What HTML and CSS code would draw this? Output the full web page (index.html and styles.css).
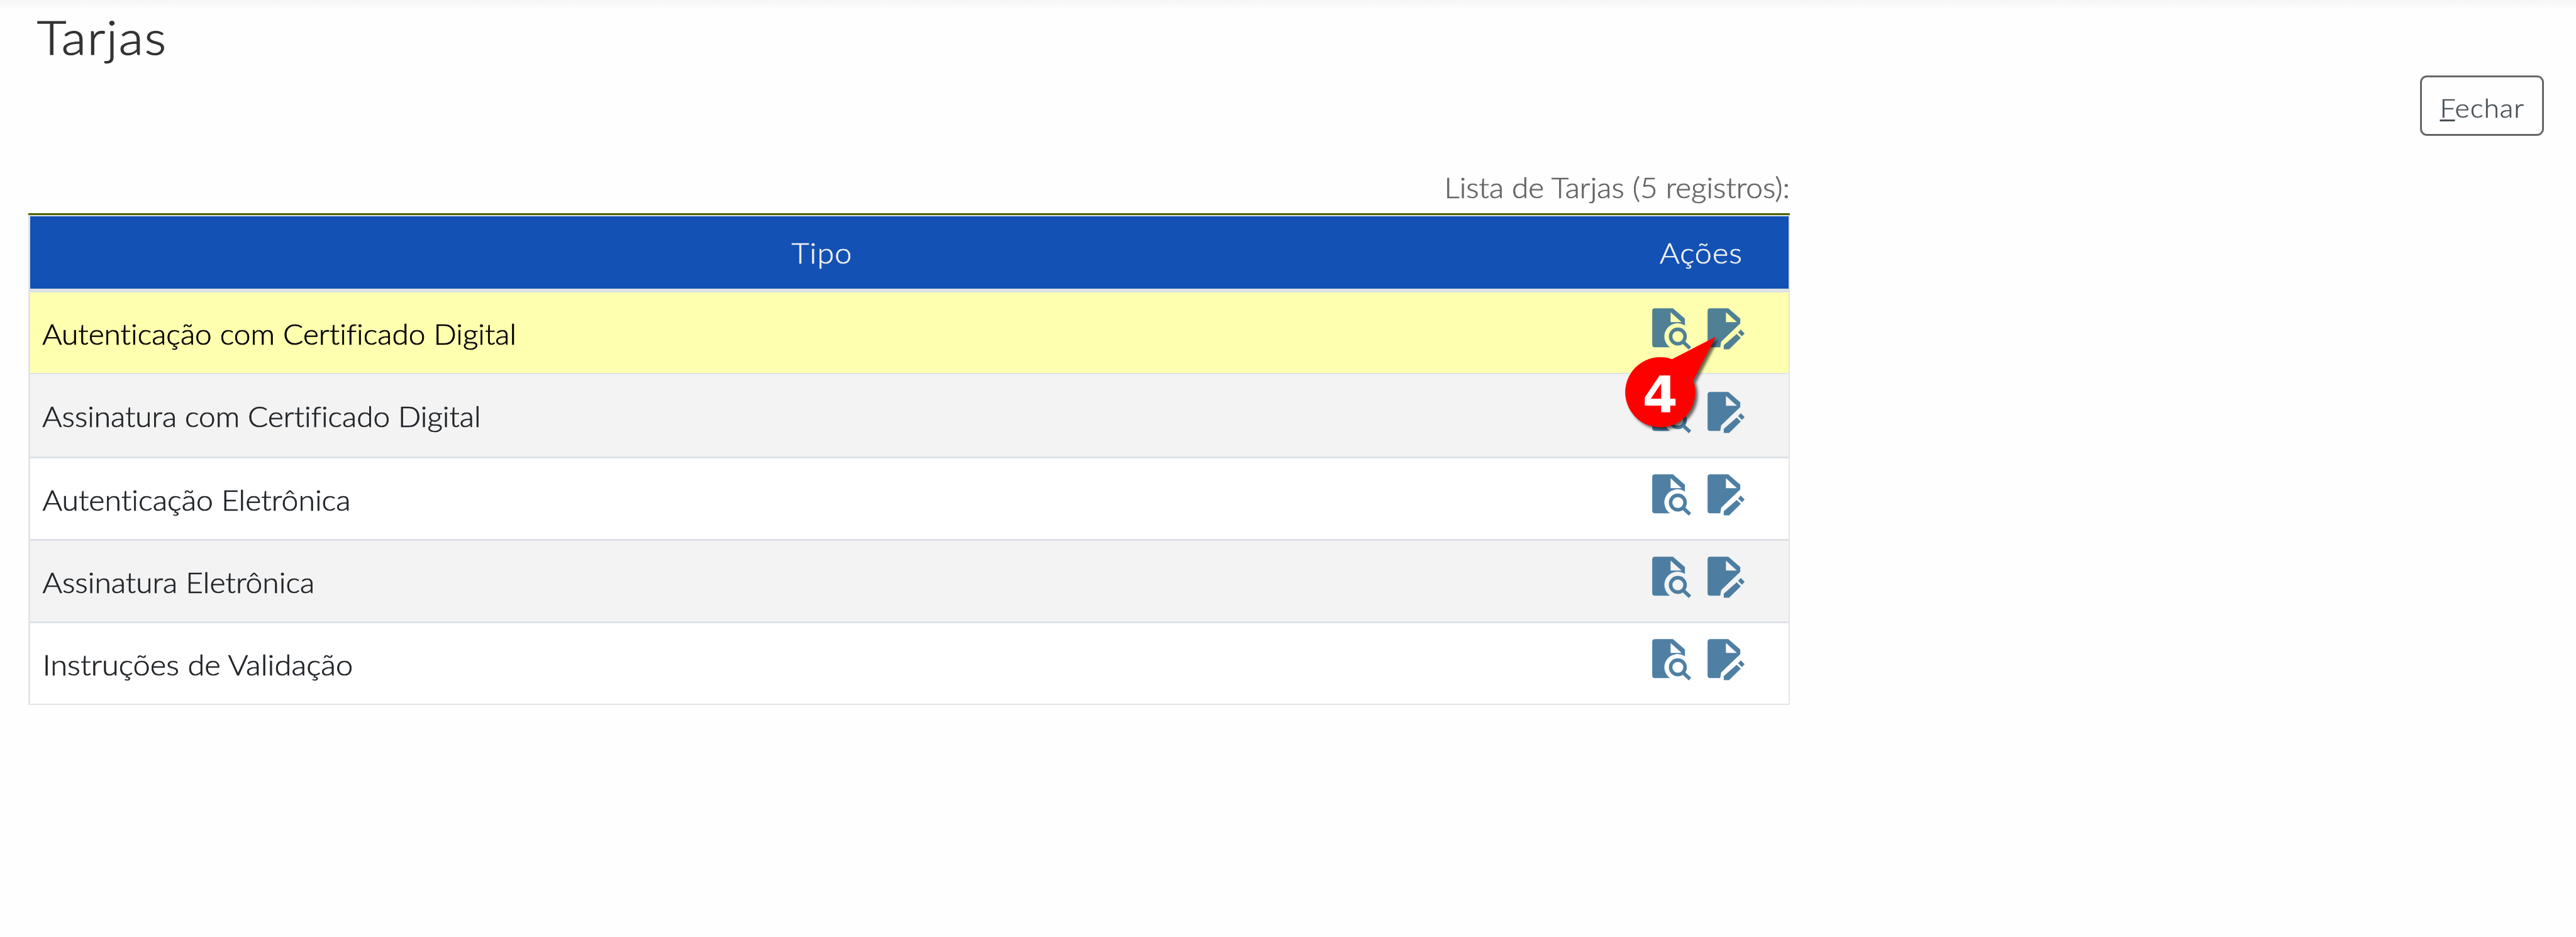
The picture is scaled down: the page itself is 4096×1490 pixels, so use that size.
FILE: index.html
```html
<!DOCTYPE html>
<html lang="pt-BR">
<head>
<meta charset="utf-8">
<title>Tarjas</title>
<link rel="stylesheet" href="styles.css">
</head>
<body>
<svg class="defs" aria-hidden="true">
  <symbol id="view" viewBox="0 0 25 25">
    <path fill-rule="evenodd" d="M2.4 .5H13.1L20.2 6.6V10.7A7.7 7.7 0 0 0 11.4 23.6H2.4Q.8 23.6 .8 22V2.1Q.8 .5 2.4 .5ZM11.7 2.8V8.7H18.2Z"/>
    <circle cx="16" cy="17.2" r="4.3" fill="none" stroke="currentColor" stroke-width="2.1"/>
    <path d="M19 20.3L23.2 24.2" fill="none" stroke="currentColor" stroke-width="2.1"/>
  </symbol>
  <symbol id="edit" viewBox="0 0 25 25">
    <path fill-rule="evenodd" d="M2.4 .5H13.1L20.2 6.6V9.4L8.9 20.2L8.3 23.6H2.4Q.8 23.6 .8 22V2.1Q.8 .5 2.4 .5ZM11.7 2.8V8.7H18.2Z"/>
    <path d="M18.1 15.7L20.5 18L13.6 24.8H10.4V22.4ZM20.5 13.1L22.8 15.4L21.2 17.1L18.9 14.8Z"/>
  </symbol>
</svg>

<header class="page-header">
  <h1 class="title">Tarjas</h1>
  <div class="toolbar">
    <button class="close" type="button"><span class="label"><u>F</u>echar</span></button>
  </div>
</header>

<main class="listing">
  <div class="caption">Lista de Tarjas (5 registros):</div>
  <div class="table">
    <div class="row head"><span class="type">Tipo</span><span class="actions">Ações</span></div>
    <div class="row active"><span class="type auth-cert">Autenticação com Certificado Digital</span><span class="actions"><svg class="icon"><use href="#view"/></svg><svg class="icon"><use href="#edit"/></svg></span></div>
    <div class="row alt"><span class="type sign-cert">Assinatura com Certificado Digital</span><span class="actions"><svg class="icon"><use href="#view"/></svg><svg class="icon"><use href="#edit"/></svg></span></div>
    <div class="row"><span class="type auth-el">Autenticação Eletrônica</span><span class="actions"><svg class="icon"><use href="#view"/></svg><svg class="icon"><use href="#edit"/></svg></span></div>
    <div class="row alt"><span class="type sign-el">Assinatura Eletrônica</span><span class="actions"><svg class="icon"><use href="#view"/></svg><svg class="icon"><use href="#edit"/></svg></span></div>
    <div class="row"><span class="type valid">Instruções de Validação</span><span class="actions"><svg class="icon"><use href="#view"/></svg><svg class="icon"><use href="#edit"/></svg></span></div>
  </div>
</main>

<svg class="callout" viewBox="0 0 170 180">
  <path d="M98.5 56.2L168.3 20.3L132.3 89.9A55.7 55.7 0 1 1 98.5 56.2Z"/>
  <text x="79.8" y="140.7" text-anchor="middle">4</text>
</svg>
</body>
</html>
```
FILE: styles.css
```css
* { box-sizing: border-box; }

body {
  margin: 0;
  width: 4096px;
  height: 1490px;
  overflow: hidden;
  position: relative;
  background: linear-gradient(#f6f6f6, #fafafa 8px, #fefefe 14px);
  font-family: Lato, "Open Sans", sans-serif;
  font-weight: 300;
  font-size: 44.5px;
  color: #212529;
  font-variant-ligatures: none;
  -webkit-text-stroke: .7px currentColor;
}

.defs { display: none; }

.page-header { height: 271px; padding-top: 14px; }

.title {
  margin: 0;
  padding-left: 54px;
  width: 400px;
  height: 90px;
  font-size: 74.2px;
  line-height: 90px;
  font-weight: 300;
  letter-spacing: 1.6px;
  color: #333;
  transform: scaleX(1.09);
  transform-origin: left;
  -webkit-text-stroke: 1.2px currentColor;
}

.toolbar {
  display: flex;
  justify-content: flex-end;
  padding: 16px 51px 0 0;
}

.close {
  width: 197px;
  height: 96px;
  padding: 7px 0 0;
  border: 3px solid #666;
  border-radius: 11px;
  background: #fefefe;
  font: 300 40.8px Lato, sans-serif;
  letter-spacing: .8px;
  color: #495057;
  -webkit-text-stroke: .6px currentColor;
}

.label {
  display: inline-block;
  transform: scaleX(1.09);
}

.close u {
  text-decoration-thickness: 2.7px;
  text-underline-offset: 3px;
}

.listing { width: 2801px; margin-left: 45px; }

.caption {
  height: 68px;
  line-height: 54px;
  text-align: right;
  color: #666;
  transform: scaleX(1.073);
  transform-origin: right;
}

.table {
  border-top: 3px solid #4b6400;
  border-bottom: 2px solid #e4e4e4;
}

.row {
  display: grid;
  grid-template-columns: 2518px 278px;
  height: 131px;
  border: solid #e4e4e4;
  border-width: 0 2px 0 3px;
  background: #fff;
  box-shadow: inset 0 -3px #dee2e6;
}

.row:last-child { height: 128px; padding-bottom: 0; box-shadow: none; }
.row:last-child .type { padding-top: 2px; }

.type {
  display: flex;
  align-items: center;
  padding: 0 0 0 18px;
  transform-origin: left;
}

.actions {
  display: flex;
  gap: 21px;
  padding: 24px 0 0 59px;
}

.head {
  height: 123px;
  border-color: #dee2e6;
  border-width: 2px 2px 6px 3px;
  background: #1351b4;
  box-shadow: none;
  color: #f0f0f0;
}

.head .type,
.head .actions {
  justify-content: center;
  align-items: center;
  padding: 0;
  letter-spacing: 1px;
  transform: scaleX(1.09);
  transform-origin: center;
}

.row.active {
  height: 130px;
  background: #ffffb0;
  box-shadow: inset 0 -2px #dee2e6;
  color: #000;
}

.row.alt { background: #f3f3f3; }
.row.active + .alt { height: 134px; }
.row.active + .alt .actions { padding-top: 27px; }
.row.active + .alt .type { padding-bottom: 2px; }

.auth-cert { transform: scaleX(1.075); }
.sign-cert { transform: scaleX(1.073); }
.auth-el { transform: scaleX(1.083); }
.sign-el { transform: scaleX(1.079); }
.valid { transform: scaleX(1.1); }

.icon {
  width: 67px;
  height: 67px;
  fill: currentColor;
  color: #24618e;
  opacity: .8;
}

.callout {
  position: absolute;
  left: 2560px;
  top: 515px;
  width: 170px;
  height: 180px;
  overflow: visible;
  fill: #f00;
  filter: drop-shadow(4px 4px 2px rgba(0, 0, 0, .6));
  -webkit-text-stroke: 0;
}

.callout text {
  font: bold 80.6px "DejaVu Sans", sans-serif;
  fill: #fff;
}
```
